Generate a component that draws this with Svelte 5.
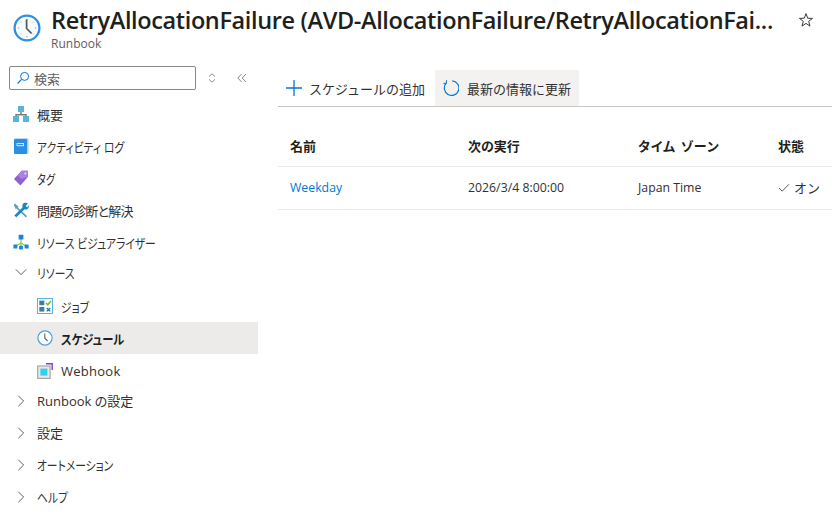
<script>
  const blue = '#0078d4';
</script>

<div class="page">
  <header class="head">
    <svg class="clock" viewBox="0 0 30 30" width="30" height="30" aria-hidden="true">
      <circle cx="15" cy="15" r="12.4" fill="#fff" stroke="#2f8fe0" stroke-width="2.3"/>
      <circle cx="15" cy="15" r="10.6" fill="#f7fbfe"/>
      <g fill="#a8b0b6">
        <circle cx="15" cy="6.5" r=".8"/><circle cx="15" cy="23.5" r=".8"/><circle cx="6.5" cy="15" r=".8"/><circle cx="23.5" cy="15" r=".8"/>
        <circle cx="9" cy="9" r=".6"/><circle cx="21" cy="9" r=".6"/><circle cx="9" cy="21" r=".6"/><circle cx="21" cy="21" r=".6"/>
      </g>
      <path d="M14.6 6.5v9l5 5" fill="none" stroke="#4f565c" stroke-width="1.7"/>
    </svg>
    <div class="titles">
      <h1>RetryAllocationFailure (AVD-AllocationFailure/RetryAllocationFai...</h1>
      <div class="sub">Runbook</div>
    </div>
    <svg class="star" viewBox="0 0 16 16" width="16" height="16" aria-hidden="true">
      <path d="M8 1.6l1.7 4.6 4.8.2-3.8 3 1.3 4.7L8 11.4 4 14.1l1.3-4.7-3.8-3 4.8-.2z" fill="none" stroke="#3b3a39" stroke-width="1"/>
    </svg>
  </header>

  <div class="body">
    <aside class="side">
      <div class="searchrow">
        <div class="search">
          <svg viewBox="0 0 14 14" width="14" height="14" aria-hidden="true">
            <circle cx="8.6" cy="5.4" r="4" fill="none" stroke="#0078d4" stroke-width="1"/>
            <path d="M5.6 8.3L1.5 12.5" stroke="#0078d4" stroke-width="1.1"/>
          </svg>
          <span>検索</span>
        </div>
        <svg class="updown" viewBox="0 0 8 10" width="8" height="10" aria-hidden="true">
          <path d="M1 3.6L4 .8l3 2.8M1 6.4l3 2.8 3-2.8" fill="none" stroke="#8a8886" stroke-width="1"/>
        </svg>
        <svg class="collapse" viewBox="0 0 10 10" width="10" height="10" aria-hidden="true">
          <path d="M4.6 1L.8 5l3.8 4M9 1L5.2 5 9 9" fill="none" stroke="#8a8886" stroke-width="1"/>
        </svg>
      </div>

      <nav>
        <div class="item top">
          <svg class="ic" viewBox="0 0 16 16" aria-hidden="true">
            <path d="M8 6v3.5M3 11V8.7h10V11" fill="none" stroke="#7a7a7a" stroke-width="1.5"/>
            <rect x="5" y="0" width="6" height="6" fill="#59b4d9"/>
            <rect x="0" y="10" width="6" height="6" fill="#59b4d9"/>
            <rect x="10" y="10" width="6" height="6" fill="#59b4d9"/>
          </svg>
          <span>概要</span>
        </div>
        <div class="item top">
          <svg class="ic" viewBox="0 0 16 16" aria-hidden="true">
            <rect x="1.5" y=".3" width="14" height="15.4" rx="1" fill="#a9cfee"/>
            <rect x="1" y="1" width="13" height="15" rx="1" fill="#2b8fe3"/>
            <rect x="3.6" y="5" width="7.4" height="3.2" fill="#fff" opacity=".85"/>
            <rect x="4.4" y="5.9" width="5.8" height="1.3" fill="#2b8fe3"/>
          </svg>
          <span class="nk">アクティビティ ログ</span>
        </div>
        <div class="item top">
          <svg class="ic" viewBox="0 0 16 16" aria-hidden="true">
            <path d="M8.6.8h6.4v6L7.4 15.6 1 9z" fill="#8e62cf"/>
            <path d="M8.6.8h6.4v6L8 9 4.8 5.2z" fill="#a883e0"/>
            <circle cx="12.4" cy="3.6" r="1" fill="#efe6fb"/>
          </svg>
          <span class="nk nk2">タグ</span>
        </div>
        <div class="item top">
          <svg class="ic" viewBox="0 0 16 16" aria-hidden="true">
            <path d="M2 1.4l3.6 3.4-.7.8L14 14l-1.2 1.4L3.6 6.6 2.8 7.2.8 3z" fill="#5ea0b8"/>
            <path d="M11 1c1.6-.5 3.3-.2 4 .4l-2.3 2.3.6 1.1 1.2.5L15.6 3c.5 1.5.1 3-1 3.9-.9.7-2 .8-3 .4L3.3 15.3l-2-1.9 8.2-8C9.2 3.5 9.6 1.7 11 1z" fill="#1a86c8"/>
          </svg>
          <span class="tight">問題の診断と解決</span>
        </div>
        <div class="item top">
          <svg class="ic" viewBox="0 0 16 16" aria-hidden="true">
            <path d="M8 5v4M8 9l-5 3M8 9l5 3M8 9v3.5" fill="none" stroke="#8cc63f" stroke-width="1.1"/>
            <rect x="5.6" y=".8" width="4.8" height="4.8" rx=".6" fill="#1a86d8"/>
            <rect x=".4" y="10.6" width="4" height="4" rx=".5" fill="#1a86d8"/>
            <rect x="11.6" y="10.6" width="4" height="4" rx=".5" fill="#1a86d8"/>
            <rect x="6.1" y="11.8" width="3.8" height="3.8" rx=".5" fill="#1a86d8"/>
          </svg>
          <span class="nk">リソース ビジュアライザー</span>
        </div>

        <div class="item group first">
          <svg class="chev" viewBox="0 0 12 12" aria-hidden="true"><path d="M.8 3.4L6 8.6l5.2-5.2" fill="none" stroke="#605e5c" stroke-width="1"/></svg>
          <span class="nk">リソース</span>
        </div>
        <div class="item child">
          <svg class="ic" viewBox="0 0 16 16" aria-hidden="true">
            <rect x=".5" y=".5" width="15" height="15" fill="#fff" stroke="#59b4d9"/>
            <rect x="2.3" y="2.6" width="5" height="4.6" fill="#3c7ea6"/>
            <rect x="2.3" y="9" width="5" height="4.6" fill="#3c7ea6"/>
            <path d="M9 5l1.8 1.8L14 3" fill="none" stroke="#76bc2d" stroke-width="1.5"/>
            <path d="M9.8 10l3.4 3.4M13.2 10l-3.4 3.4" stroke="#0f77c4" stroke-width="1.3"/>
          </svg>
          <span class="nk">ジョブ</span>
        </div>
        <div class="item child selected">
          <svg class="ic" viewBox="0 0 16 16" aria-hidden="true">
            <circle cx="8" cy="8" r="7.1" fill="#fff" stroke="#4f9fe3" stroke-width="1.2"/>
            <path d="M7.8 3.6v4.6l2.8 2.8" fill="none" stroke="#5b6268" stroke-width="1.1"/>
          </svg>
          <span class="nk nk3">スケジュール</span>
        </div>
        <div class="item child hook">
          <svg class="ic" viewBox="0 0 16 16" aria-hidden="true">
            <path d="M9 .8h6.2V7" fill="none" stroke="#7b3fd6" stroke-width="1.4"/>
            <rect x=".7" y="3" width="12.4" height="12.4" fill="#e8e8e8" stroke="#a6a6a6" stroke-width="1.2"/>
            <rect x="3.4" y="5.6" width="7" height="7" fill="#32d0f0"/>
          </svg>
          <span class="lat">Webhook</span>
        </div>

        <div class="item group">
          <svg class="chev" viewBox="0 0 12 12" aria-hidden="true"><path d="M3.4.8L8.6 6l-5.2 5.2" fill="none" stroke="#605e5c" stroke-width="1"/></svg>
          <span>Runbook の設定</span>
        </div>
        <div class="item group">
          <svg class="chev" viewBox="0 0 12 12" aria-hidden="true"><path d="M3.4.8L8.6 6l-5.2 5.2" fill="none" stroke="#605e5c" stroke-width="1"/></svg>
          <span>設定</span>
        </div>
        <div class="item group">
          <svg class="chev" viewBox="0 0 12 12" aria-hidden="true"><path d="M3.4.8L8.6 6l-5.2 5.2" fill="none" stroke="#605e5c" stroke-width="1"/></svg>
          <span class="nk">オートメーション</span>
        </div>
        <div class="item group">
          <svg class="chev" viewBox="0 0 12 12" aria-hidden="true"><path d="M3.4.8L8.6 6l-5.2 5.2" fill="none" stroke="#605e5c" stroke-width="1"/></svg>
          <span class="nk">ヘルプ</span>
        </div>
      </nav>
    </aside>

    <main class="main">
      <div class="toolbar">
        <button class="tb add">
          <svg viewBox="0 0 16 16" width="16" height="16" aria-hidden="true"><path d="M8 0v16M0 8h16" stroke={blue} stroke-width="1.3"/></svg>
          <span>スケジュールの追加</span>
        </button>
        <button class="tb hover">
          <svg viewBox="0 0 16 18" width="16" height="18" aria-hidden="true">
            <path d="M9.2 1.8A7.3 7.3 0 1 1 3.2 4.2" fill="none" stroke={blue} stroke-width="1.2"/>
            <path d="M3.4 1.2v3.2h-3" fill="none" stroke={blue} stroke-width="1"/>
          </svg>
          <span>最新の情報に更新</span>
        </button>
      </div>

      <div class="table">
        <div class="row th">
          <div>名前</div><div>次の実行</div><div class="tz">タイム ゾーン</div><div>状態</div>
        </div>
        <div class="row td">
          <div class="link">Weekday</div>
          <div>2026/3/4 8:00:00</div>
          <div>Japan Time</div>
          <div class="status">
            <svg viewBox="0 0 12 10" width="12" height="10" aria-hidden="true"><path d="M1 5l3.2 3.2L11 1.2" fill="none" stroke="#605e5c" stroke-width="1"/></svg>
            <span class="on">オン</span>
          </div>
        </div>
      </div>
    </main>
  </div>
</div>

<style>
  :global(body) {
    margin: 0;
    background: #fff;
  }
  .page {
    width: 832px;
    height: 522px;
    overflow: hidden;
    font-family: "Open Sans", "Noto Sans CJK JP", sans-serif;
    font-size: 13px;
    color: #323130;
    display: flex;
    flex-direction: column;
  }
  .head {
    display: flex;
    height: 66px;
    padding: 0 0 0 12px;
    box-sizing: border-box;
    flex: none;
  }
  .clock {
    margin-top: 13px;
    flex: none;
  }
  .titles {
    margin-left: 9px;
    width: 747px;
    flex: none;
  }
  h1 {
    margin: 7px 0 2px;
    font-size: 23.5px;
    line-height: 27px;
    font-weight: 600;
    letter-spacing: -0.37px;
    color: #201f1e;
    white-space: nowrap;
    font-family: "Open Sans", sans-serif;
  }
  .sub {
    font-size: 12px;
    line-height: 16px;
    color: #605e5c;
  }
  .star {
    margin-top: 12px;
    flex: none;
  }
  .body {
    display: flex;
    flex: 1;
    min-height: 0;
  }
  .side {
    width: 258px;
    flex: none;
  }
  .searchrow {
    display: flex;
    align-items: center;
    height: 24px;
    padding-left: 9px;
  }
  .search {
    width: 187px;
    height: 24px;
    box-sizing: border-box;
    border: 1px solid #8a8886;
    border-radius: 2px;
    display: flex;
    align-items: center;
    gap: 4px;
    padding-left: 6px;
    color: #605e5c;
    flex: none;
  }
  .updown {
    margin-left: 12px;
    flex: none;
  }
  .collapse {
    margin-left: 21px;
    flex: none;
  }
  nav {
    margin-top: 9px;
  }
  .item {
    display: flex;
    align-items: center;
    height: 32px;
    box-sizing: border-box;
    padding-left: 13px;
    gap: 8px;
    color: #323130;
    white-space: nowrap;
  }
  .top {
    padding-bottom: 2px;
  }
  .hook {
    padding-top: 2px;
  }
  .nk {
    display: inline-block;
    font-feature-settings: "palt";
    transform: scaleX(0.83);
    transform-origin: left center;
  }
  .nk2 {
    transform: scaleX(0.78);
  }
  .nk3 {
    transform: scaleX(0.87);
  }
  .tight {
    font-feature-settings: "palt";
    letter-spacing: -0.8px;
  }
  .ic {
    width: 16px;
    height: 16px;
    flex: none;
  }
  .chev {
    width: 12px;
    height: 12px;
    flex: none;
    margin-left: 2px;
    margin-right: 2px;
  }
  .group {
    padding-bottom: 3px;
    font-feature-settings: "palt";
  }
  .first {
    height: 31px;
    padding-bottom: 5px;
  }
  .child {
    padding-left: 37px;
  }
  .lat {
    letter-spacing: 0.02em;
  }
  .selected {
    background: #edebe9;
    font-weight: 700;
    color: #201f1e;
  }
  .main {
    flex: 1;
    padding: 4px 0 0 20px;
    min-width: 0;
  }
  .toolbar {
    display: flex;
    height: 36px;
    border-bottom: 1px solid #c8c6c4;
  }
  .tb {
    display: flex;
    align-items: center;
    border: 0;
    background: none;
    font: inherit;
    color: #323130;
    height: 36px;
    padding: 0 8px;
    gap: 8px;
    white-space: nowrap;
  }
  .add {
    gap: 7px;
    padding-right: 10px;
  }
  .hover {
    background: #f3f2f1;
  }
  .table {
    margin-top: 20px;
  }
  .row {
    display: grid;
    grid-template-columns: 178px 170px 140px 1fr;
    padding-left: 12px;
    align-items: center;
    border-bottom: 1px solid #edebe9;
    box-sizing: border-box;
  }
  .th {
    height: 40px;
    padding-bottom: 3px;
    font-weight: 700;
    font-feature-settings: "palt";
    color: #201f1e;
  }
  .tz {
    letter-spacing: 1px;
  }
  .td {
    height: 43px;
    padding-bottom: 1px;
    font-size: 12.3px;
  }
  .link {
    color: #0078d4;
  }
  .status {
    display: flex;
    align-items: center;
    gap: 4px;
    white-space: nowrap;
  }
  .on {
    font-size: 13px;
  }
</style>
